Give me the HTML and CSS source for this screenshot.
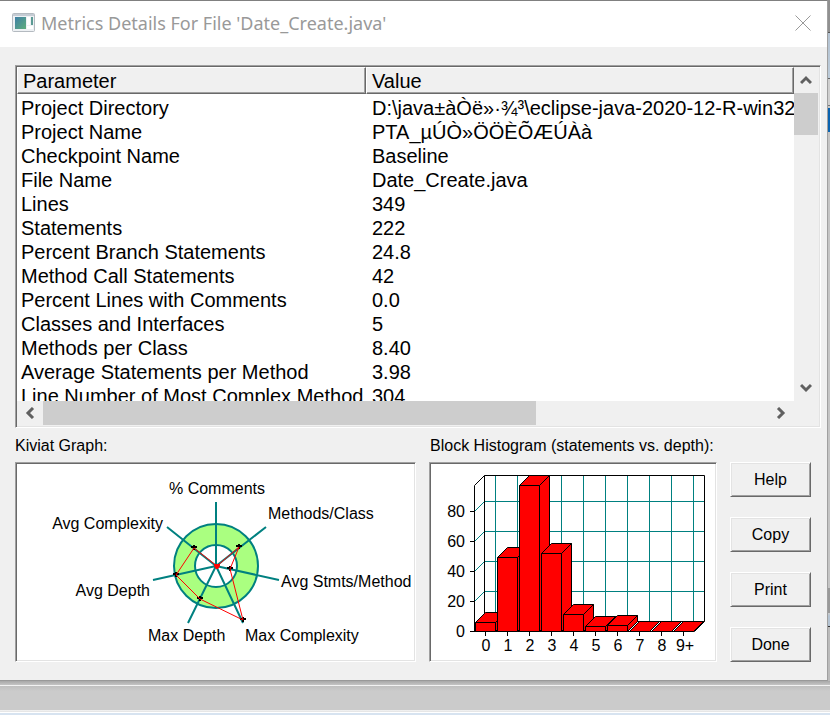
FILE: index.html
```html
<!DOCTYPE html>
<html lang="en">
<head>
    <meta charset="utf-8">
    <title>Metrics Details</title>
    <link rel="stylesheet" href="styles.css">
</head>
<body>
    <main class="dialog">
        <header class="titlebar">
            <svg class="app-icon" width="24" height="20" viewBox="0 0 24 20">
                <defs>
                    <linearGradient id="screen" x1="0" y1="0" x2="1" y2="1">
                        <stop offset="0" stop-color="#3f7fa6"/>
                        <stop offset="1" stop-color="#5fae7c"/>
                    </linearGradient>
                </defs>
                <rect x="0.5" y="0.5" width="22" height="18" rx="1" fill="#eef1f4" stroke="#b4bac0"/>
                <path d="M1 2h21" stroke="#c5ccd4" stroke-width="2"/>
                <rect x="3" y="4" width="11" height="12" fill="url(#screen)"/>
                <rect x="15" y="4" width="3" height="8" fill="#fff"/>
                <rect x="19" y="4" width="2" height="8" fill="#5b9a94"/>
                <rect x="15" y="13" width="6" height="3" fill="#fff"/>
            </svg>
            <h1>Metrics Details For File 'Date_Create.java'</h1>
            <button class="close" aria-label="Close">
                <svg width="16" height="16" viewBox="0 0 16 16"><path d="M0.5 0.5l15 15M15.5 0.5l-15 15"/></svg>
            </button>
        </header>

        <section class="list sunken">
            <div class="viewport">
                <table>
                    <thead>
                        <tr><th class="param" scope="col">Parameter</th><th scope="col">Value</th></tr>
                    </thead>
                    <tbody>
                        <tr><td>Project Directory</td><td>D:\java±àÒë»·¾³\eclipse-java-2020-12-R-win32-</td></tr>
                        <tr><td>Project Name</td><td>PTA_µÚÒ»ÖÖÈÕÆÚÀà</td></tr>
                        <tr><td>Checkpoint Name</td><td>Baseline</td></tr>
                        <tr><td>File Name</td><td>Date_Create.java</td></tr>
                        <tr><td>Lines</td><td>349</td></tr>
                        <tr><td>Statements</td><td>222</td></tr>
                        <tr><td>Percent Branch Statements</td><td>24.8</td></tr>
                        <tr><td>Method Call Statements</td><td>42</td></tr>
                        <tr><td>Percent Lines with Comments</td><td>0.0</td></tr>
                        <tr><td>Classes and Interfaces</td><td>5</td></tr>
                        <tr><td>Methods per Class</td><td>8.40</td></tr>
                        <tr><td>Average Statements per Method</td><td>3.98</td></tr>
                        <tr><td>Line Number of Most Complex Method</td><td>304</td></tr>
                    </tbody>
                </table>
            </div>
            <div class="scroll-v">
                <button aria-label="Scroll up"><svg width="12" height="10" viewBox="0 0 12 10"><path d="M1 8l5-5 5 5"/></svg></button>
                <div class="track"><div class="thumb"></div></div>
                <button aria-label="Scroll down"><svg width="12" height="10" viewBox="0 0 12 10"><path d="M1 2l5 5 5-5"/></svg></button>
            </div>
            <div class="scroll-h">
                <button aria-label="Scroll left"><svg width="10" height="12" viewBox="0 0 10 12"><path d="M8 1l-5 5 5 5"/></svg></button>
                <div class="track"><div class="thumb"></div></div>
                <button aria-label="Scroll right"><svg width="10" height="12" viewBox="0 0 10 12"><path d="M2 1l5 5-5 5"/></svg></button>
            </div>
        </section>

        <section class="charts">
            <h2>Kiviat Graph:</h2>
            <h2 class="wide">Block Histogram (statements vs. depth):</h2>

            <div class="sunken">
                <svg class="chart" viewBox="0 0 397 196">
                    <circle cx="199" cy="102" r="42" fill="#aaff80"/>
                    <circle cx="199" cy="102" r="21" fill="#fff"/>
                    <g class="rings">
                        <circle cx="199" cy="102" r="42"/>
                        <circle cx="199" cy="102" r="21"/>
                        <path d="M199 102V38M199 102L249 63M199 102L262 116M199 102L226 159M199 102L171 159M199 102L136 116M199 102L150 63"/>
                    </g>
                    <path class="marks" d="M219 82h6M222 80v5M210 104h6M213 102v5M223 155h6M226 153v5M180 134h6M183 132v5M156 110h6M159 108v5M174 83h6M177 81v5M197 101h6"/>
                    <path class="values" d="M200 102L222 83L213 105L226 156L183 135L159 111L177 84Z"/>
                    <path d="M197 100h6v2l-2 3h-2l-2-3z" fill="#f00"/>
                    <text x="200" y="30" text-anchor="middle">% Comments</text>
                    <text x="251" y="55">Methods/Class</text>
                    <text x="264" y="123">Avg Stmts/Method</text>
                    <text x="228" y="177">Max Complexity</text>
                    <text x="131" y="177">Max Depth</text>
                    <text x="133" y="132" text-anchor="end">Avg Depth</text>
                    <text x="146" y="65" text-anchor="end">Avg Complexity</text>
                </svg>
            </div>

            <div class="sunken">
                <svg class="chart" viewBox="0 0 284 196">
                    <path class="grid" d="M64.5 12V157M86.5 12V157M108.5 12V157M130.5 12V157M152.5 12V157M174.5 12V157M196.5 12V157M218.5 12V157M240.5 12V157M262.5 12V157"/>
                    <path class="grid" d="M43.5 47.5l10-10H273M43.5 77.5l10-10H273M43.5 107.5l10-10H273M43.5 137.5l10-10H273"/>
                    <path class="axis" d="M53.5 157.5V11.5H273.5V157.5H53.5M53.5 11.5L43.5 21.5V167.5L53.5 157.5M39 47.5h4M39 77.5h4M39 107.5h4M39 137.5h4M39 167.5H263.5L273.5 157.5"/>
                    <path class="axis" d="M54.5 168v4M76.5 168v4M98.5 168v4M120.5 168v4M142.5 168v4M164.5 168v4M186.5 168v4M208.5 168v4M230.5 168v4M252.5 168v4"/>
                    <g id="bars" class="bars"></g>
                    <g text-anchor="end">
                        <text x="34" y="53">80</text>
                        <text x="34" y="83">60</text>
                        <text x="34" y="113">40</text>
                        <text x="34" y="143">20</text>
                        <text x="34" y="173">0</text>
                    </g>
                    <g text-anchor="middle">
                        <text x="55" y="187">0</text>
                        <text x="77" y="187">1</text>
                        <text x="99" y="187">2</text>
                        <text x="121" y="187">3</text>
                        <text x="143" y="187">4</text>
                        <text x="165" y="187">5</text>
                        <text x="187" y="187">6</text>
                        <text x="209" y="187">7</text>
                        <text x="231" y="187">8</text>
                        <text x="254" y="187">9+</text>
                    </g>
                </svg>
            </div>

            <div class="buttons">
                <button>Help</button>
                <button>Copy</button>
                <button>Print</button>
                <button>Done</button>
            </div>
        </section>
    </main>

    <script>
        // bar heights in px, one per block depth (0 to 9+)
        const heights = [9, 74, 146, 78, 17, 5, 6, 0, 0, 0];
        const base = 167.5;
        let shapes = '';

        heights.forEach((h, i) => {
            const x = 44.5 + i * 22;
            const y = base - h;
            shapes += `<path d="M${x} ${y}l10 -10h20l-10 10z"/>`;
            if (h > 0) {
                shapes += `<path d="M${x + 20} ${y}l10 -10v${h}l-10 10z"/>`;
                shapes += `<path d="M${x} ${y}h20v${h}h-20z"/>`;
            }
        });
        document.getElementById('bars').innerHTML = shapes;
    </script>
</body>
</html>
```

FILE: styles.css
```css
* {
    box-sizing: border-box;
}

body {
    margin: 0;
    height: 100vh;
    display: flex;
    flex-direction: column;
    overflow: hidden;
    font-family: "Liberation Sans", Arial, sans-serif;
    font-size: 16px;
    color: #000;
    /* desktop behind the dialog: status bar below, strip on the right */
    background:
        linear-gradient(#a8a8a8, #c4c4c4 4px, #f2f2f2 4px, #f2f2f2 5px, #bfbfbf 5px, #cbcbcb 10px, #cbcbcb 29px, #f4f4f4 29px, #e2e2e2 31px, #fff 31px, #fff 32px, #d7e3f0 32px) bottom / 100% 34px no-repeat,
        linear-gradient(#909090 32px, #555 32px, #555 33px, #b4c3d2 33px, #bccbd9 78px, #666 78px, #666 79px, #cfcfcf 79px, #cfcfcf 105px, #777 105px, #777 106px, #c8c8c8 106px, #c8c8c8 108px, #0a63b0 108px, #0a63b0 132px, #c4c4c4 132px, #c4c4c4 588px, #999 588px, #999 613px, #ccc 613px, #b4c3d2 616px, #b4c3d2 626px, #333 626px, #333 627px, #bbb 627px);
}

button {
    font: inherit;
    color: inherit;
    padding: 0;
    background: #f0f0f0;
}

.dialog {
    flex: 1;
    min-height: 0;
    margin: 0 2px 34px 0;
    display: flex;
    flex-direction: column;
    background: #f0f0f0;
    border: solid #808080;
    border-width: 1px 1px 1px 0;
    border-right-color: #a0a0a0;
    border-bottom-color: #999;
}

.titlebar {
    display: flex;
    align-items: center;
    gap: 5px;
    height: 46px;
    padding: 0 16px 2px 12px;
    background: #fff;
}

.titlebar h1 {
    flex: 1;
    margin: 0;
    font: 18px "Noto Sans", "Open Sans", sans-serif;
    color: #999;
}

.close {
    display: flex;
    border: 0;
    background: none;
}

.close path {
    stroke: #999;
    fill: none;
}

/* two pixel bevel around the list and the charts */
.sunken {
    background: #fff;
    border: 1px solid;
    border-color: #a0a0a0 #fff #fff #a0a0a0;
    box-shadow: inset 1px 1px #696969, inset -1px -1px #e3e3e3;
    padding: 1px;
}

.list {
    flex: 1;
    min-height: 0;
    margin: 18px 6px 0 15px;
    display: grid;
    grid-template-columns: minmax(0, 1fr) 25px;
    grid-template-rows: minmax(0, 1fr) 25px;
}

.viewport {
    overflow: hidden;
    font-size: 20px;
    line-height: 24px;
}

table {
    width: 100%;
    table-layout: fixed;
    border-spacing: 0;
    white-space: nowrap;
}

th {
    height: 27px;
    padding: 0 6px 0 5px;
    text-align: left;
    font-weight: normal;
    background: #f0f0f0;
    border: 1px solid;
    border-color: #fff #696969 #696969 #fff;
    box-shadow: inset -1px -1px #a0a0a0;
}

.param {
    width: 349px;
}

td {
    padding: 0 0 0 6px;
}

td:first-child {
    padding-left: 4px;
}

tbody::before {
    content: "";
    display: block;
    height: 2px;
}

.scroll-v,
.scroll-h {
    display: flex;
    background: #f0f0f0;
}

.scroll-v {
    flex-direction: column;
    border-right: 1px solid #f0f0f0;
}

.scroll-h {
    border-bottom: 1px solid #f0f0f0;
}

/* corner between the two scrollbars */
.list::after {
    content: "";
    background: #f0f0f0;
}

.scroll-v button,
.scroll-h button {
    display: flex;
    align-items: center;
    justify-content: center;
    flex: 0 0 26px;
    border: 0;
}

.scroll-v path,
.scroll-h path {
    fill: none;
    stroke: #606060;
    stroke-width: 3;
}

.track {
    flex: 1;
    display: flex;
}

.thumb {
    background: #cdcdcd;
}

.scroll-v .thumb {
    width: 100%;
    height: 42px;
}

.scroll-h .thumb {
    width: 68%;
}

.charts {
    display: grid;
    grid-template-columns: minmax(0, 401fr) minmax(0, 288fr) 81px;
    column-gap: 13px;
    padding: 6px 16px 18px 15px;
}

.charts h2 {
    margin: 0;
    font-size: 16px;
    font-weight: normal;
    line-height: 24px;
    padding-bottom: 4px;
}

.charts .wide {
    grid-column: 2 / 4;
    padding-left: 1px;
}

.chart {
    display: block;
    width: 100%;
    height: 100%;
}

.rings {
    fill: none;
    stroke: #008080;
    stroke-width: 2;
}

.marks {
    stroke: #000;
    stroke-width: 2;
}

.values {
    fill: none;
    stroke: #f00;
}

.grid,
.axis {
    fill: none;
    stroke: #008080;
}

.axis {
    stroke: #000;
}

.bars {
    fill: #f00;
    stroke: #000;
}

.buttons {
    display: flex;
    flex-direction: column;
    gap: 20px;
}

.buttons button {
    height: 35px;
    border: 1px solid;
    border-color: #fff #696969 #696969 #fff;
    box-shadow: inset 1px 1px #e3e3e3, inset -1px -1px #a0a0a0;
}
```
